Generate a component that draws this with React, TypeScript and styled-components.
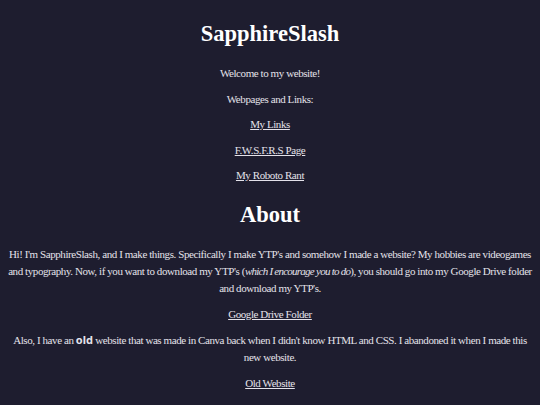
import React from "react";
import styled, { createGlobalStyle } from "styled-components";

const GlobalStyle = createGlobalStyle`
  html, body {
    margin: 0;
    padding: 0;
    background-color: #1e1d2f;
  }

  body {
    font-family: "Liberation Serif", "DejaVu Serif", serif;
    color: #e4e2ea;
  }
`;

const links = ["My Links", "F.W.S.F.R.S Page", "My Roboto Rant"];

export default function App() {
  return (
    <>
      <GlobalStyle />
      <Page>
        <Heading>SapphireSlash</Heading>
        <Text>Welcome to my website!</Text>
        <Text>Webpages and Links:</Text>
        {links.map((label) => (
          <Text key={label}>
            <Link href="#">{label}</Link>
          </Text>
        ))}

        <Heading>About</Heading>
        <Text>
          Hi! I'm SapphireSlash, and I make things. Specifically I make YTP's
          and somehow I made a website? My hobbies are videogames and
          typography. Now, if you want to download my YTP's (
          <Em>which I encourage you to do</Em>), you should go into my Google
          Drive folder and download my YTP's.
        </Text>
        <Text>
          <Link href="#">Google Drive Folder</Link>
        </Text>
        <Text>
          Also, I have an <Strong>old</Strong> website that was made in Canva
          back when I didn't know HTML and CSS. I abandoned it when I made this
          new website.
        </Text>
        <Text>
          <Link href="#">Old Website</Link>
        </Text>
      </Page>
    </>
  );
}

const Page = styled.main`
  display: block;
  padding: 3px 4.5px 0;
  text-align: center;
`;

const Heading = styled.h1`
  margin: 17px 0;
  font-family: "Liberation Serif", serif;
  font-size: 22.5px;
  font-weight: 700;
  line-height: 28px;
  color: #ffffff;
`;

const Text = styled.p`
  margin: 8.5px 0;
  font-size: 11px;
  line-height: 17px;
  letter-spacing: -0.42px;
`;

const Link = styled.a`
  color: #e4e2ea;
  text-decoration: underline;
`;

const Em = styled.em`
  font-style: italic;
  letter-spacing: -0.75px;
`;

const Strong = styled.strong`
  font-family: "Noto Sans", sans-serif;
  font-weight: 700;
  letter-spacing: 0;
`;
